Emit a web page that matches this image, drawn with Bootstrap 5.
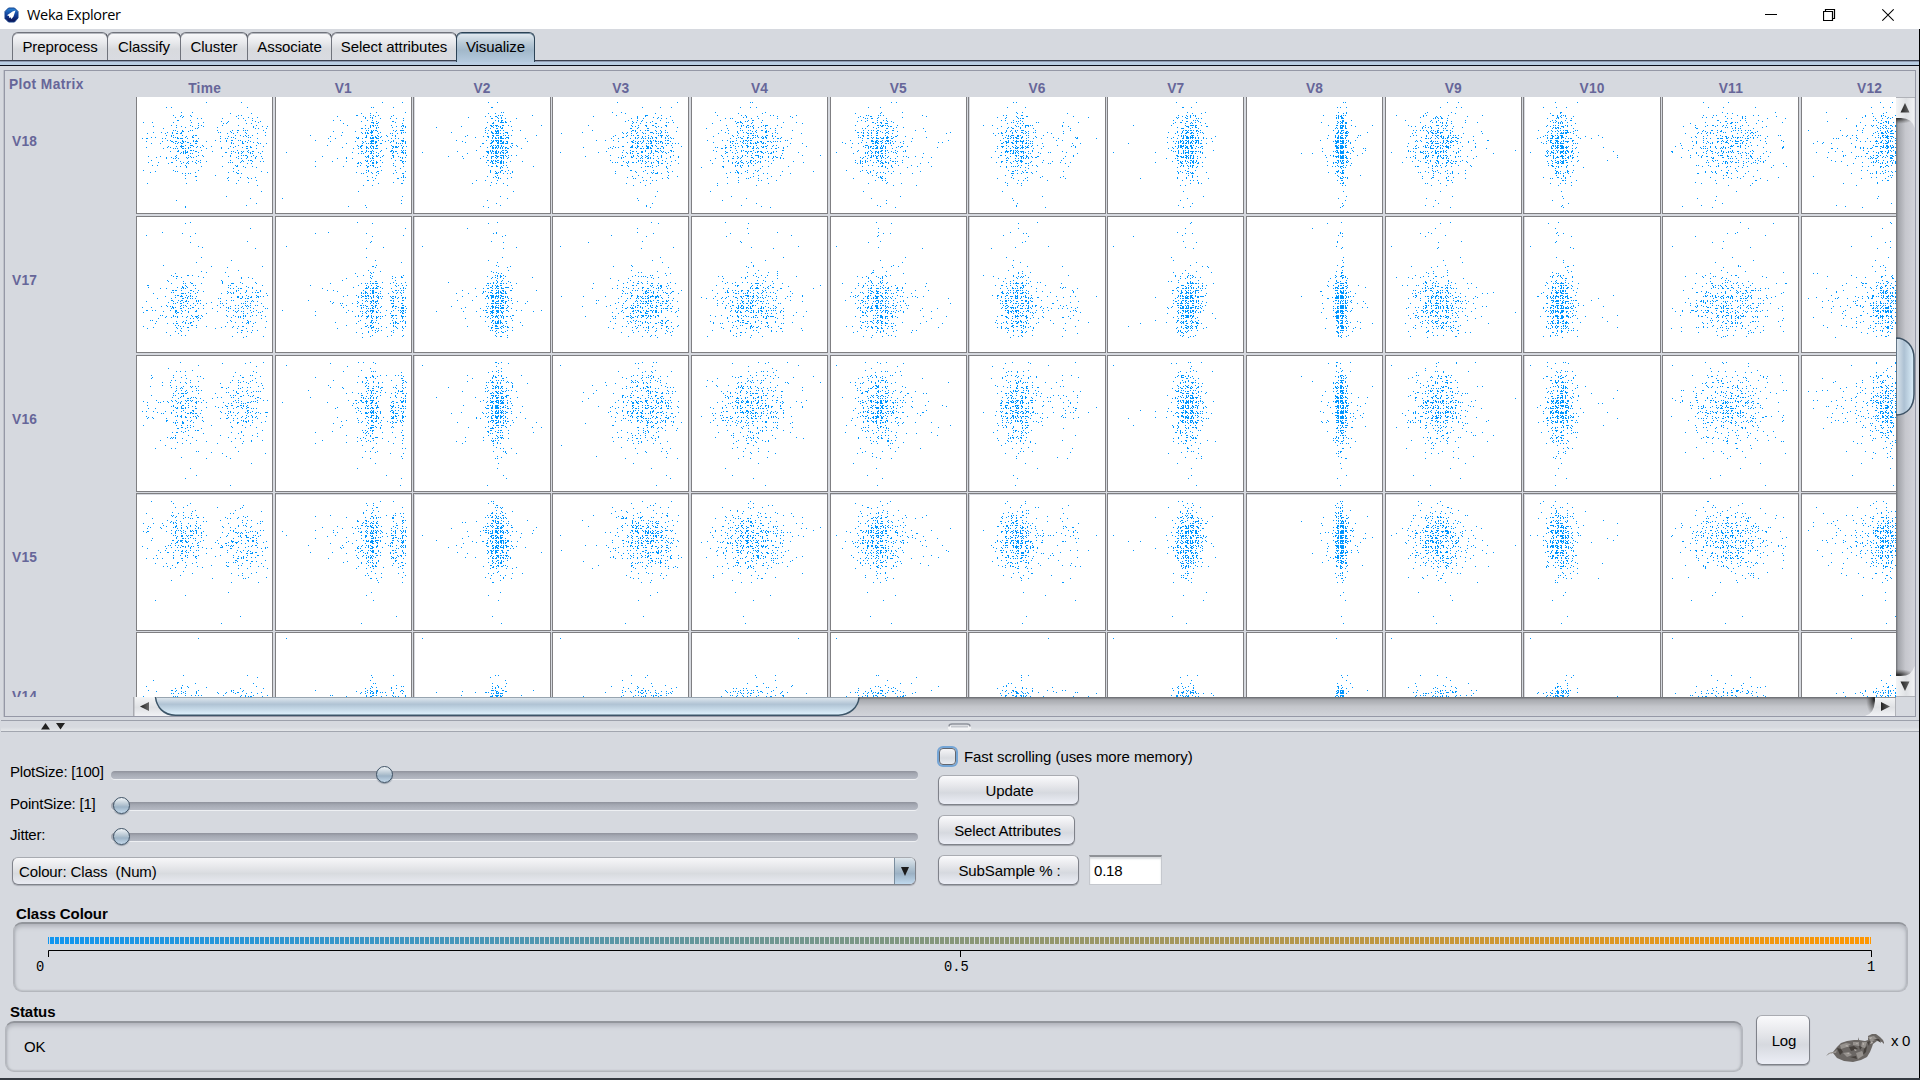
<!DOCTYPE html>
<html lang="en">
<head>
<meta charset="utf-8">
<title>Weka Explorer</title>
<link rel="stylesheet" href="https://cdn.jsdelivr.net/npm/bootstrap@5.3.0/dist/css/bootstrap.min.css">
<style>
  body { width:1920px; height:1080px; overflow:hidden; background:#d6d9df; color:#000; letter-spacing:-.07px;
         font-family:"Liberation Sans",Arial,sans-serif; font-size:15px; line-height:20px; }
  svg { display:block; flex:none; }
  .window { height:1080px; border-right:1px solid #000; }
  .titlebar { height:29px; background:#fff; padding-left:4px; margin-right:-1px; }
  .caption { font-family:"Open Sans","Noto Sans",sans-serif; font-size:14.5px; letter-spacing:-.32px; margin-left:8px; line-height:22px; }
  .wcontrols { gap:46px; padding-right:26px; }

  .tabs { height:31px; padding:3px 0 0 12px; }
  .tabs .nav-link { height:29px; padding:0; text-align:center; color:#000; border:1px solid #70737c; border-bottom-color:#10131c;
      border-right-color:#33363f; border-radius:6px 6px 0 0; line-height:20px; padding-top:4px; margin-right:-1px;
      background:linear-gradient(#f9f9fb,#e8e9ec 35%,#d8dade 60%,#d9dbe1); box-shadow:inset 0 1px 0 #b5b8bf; }
  .tabs .nav-link.active { color:#000; background:linear-gradient(#e4ebf1,#b9cad7 35%,#a2b8ca 60%,#b5cade); border-color:#2c4356; border-bottom:0; box-shadow:inset 0 1px 0 #7d93a5; z-index:2; position:relative; height:30px; }
  .tabstrip { height:6px; background:linear-gradient(#3a3f4e 0 1px,#8e9ab0 1px 2px,#b9cde2 2px 5px,#0b0e18 5px); }

  .plotpanel { margin:4px 3px 0 4px; height:647px; border:1px solid #9598a6; box-shadow:-1px 0 0 #c0c3cb; }
  .purple { color:#666699; font-weight:700; font-size:13.75px; line-height:16px; letter-spacing:.25px; }
  .colheads { height:26px; overflow:hidden; }
  .panelname { width:131px; padding:6px 0 0 4px; flex:none; letter-spacing:.4px; }
  .colhead { width:138.75px; flex:none; text-align:center; padding:10px 1.5px 0 0; }
  .plotbody { height:600px; overflow:hidden; }
  .rowheads { width:131px; flex:none; padding-left:7px; }
  .rowheads div { height:138.75px; padding-top:57px; }
  .rowheads div, .matrix { position:relative; top:-20px; }
  .viewport { width:1760px; height:600px; overflow:hidden; flex:none; }
  .matrix { display:grid; width:1803px;
     grid-template-columns:139px 138px 139px 139px 139px 138px 139px 139px 139px 138px 139px 139px 139px;
     grid-template-rows:139px 139px 138px 139px 139px; }
  .matrix canvas { display:block; }
  .hscroll { margin-left:128px; }

  .divider { height:12px; margin:3px 0 0 1px; border-top:1px solid #9ca0ab; border-bottom:1px solid #a2a6af; background:linear-gradient(#d6d9df 60%,#e5e7ea); }

  .controls { height:166px; }
  .sliders { width:920px; padding-top:30px; }
  .slide-row { height:31px; padding-left:10px; }
  .slide-row span { width:101px; white-space:nowrap; letter-spacing:-.2px; }
  .slide-row + .slide-row span { padding-top:1px; }
  .track { position:relative; width:807px; height:8px; margin-top:9px; border-radius:4px; background:linear-gradient(#8f929c,#a4a8b2 35%,#b6bac4); box-shadow:0 1px 0 #eef0f3; flex:none; }
  .knob { position:absolute; top:-5px; width:17px; height:17px; border-radius:50%; border:1.5px solid #3f5366; background:linear-gradient(#f0f4f7,#b4c4d1 45%,#9db3c6 60%,#c3d8ea); box-shadow:0 1px 1px #8f98a3; }
  .combo { height:28px; width:904px; margin:2px 0 0 12px; border:1.5px solid #80838b; border-top-color:#a8abb1; border-radius:6px; padding-left:6px; overflow:hidden;
     background:linear-gradient(#f7f7f9,#e6e7ea 35%,#d8dbdf 60%,#e9ebf2); box-shadow:0 1px 1px #a9acb4; line-height:27px; white-space:pre; letter-spacing:-.12px; }
  .combo-arrow { width:21px; border-left:1px solid #7a8d9e; background:linear-gradient(#dfe7ed,#afc1cf 40%,#9bb1c4 60%,#c0d9ee); }
  .actions { padding:14px 0 0 18px; }
  .nbtn { padding:2px 0 0 2px; color:#000; font-size:15px; line-height:20px; letter-spacing:-.1px; border:1.5px solid #7f828a; border-top-color:#a9abb1; border-radius:6px;
      background:linear-gradient(#fafafc,#e6e7eb 35%,#d6d9df 60%,#eceef6); box-shadow:0 1px 1px #a0a3aa; height:30px; }
  .tick { width:17px; height:17px; border:1.5px solid #62666e; border-radius:4px; background:linear-gradient(#f5f5f7,#d9dce1 60%,#e9ebf1); box-shadow:0 0 0 2px #74a5d6; margin:2px 8px 0 1px; }
  .percent { width:73px; height:30px; border:1px solid #c5c8ce; border-top:2px solid #8f9297; border-radius:0; background:#fff; padding:0 0 0 4px; font-size:15px; letter-spacing:-.2px; color:#000; margin-left:10px; box-shadow:inset 0 2px 2px #dadcdf; }

  .sunken { border:1px solid #b4b7bd; border-top:2px solid #92959b; border-radius:9px; box-shadow:inset 0 3px 4px #b4b7be, inset 1px 0 2px #aeb1b7, inset -1px 0 2px #aeb1b7; }
  .heading { font-weight:700; line-height:20px; }
  .legendbox { margin:0 11px 0 13px; height:70px; width:1895px; }
  .statusbox { width:1738px; height:51px; padding:14px 0 0 18px; line-height:20px; }
  .scale-label { font-family:"Liberation Mono",monospace; font-size:13.75px; fill:#000; letter-spacing:0; }
  .logbtn { width:54px; height:50px; }
  .taskedge { height:2px; background:#353a41; margin-right:-1px; }
</style>
</head>
<body>
<div class="window d-flex flex-column">
  <header class="titlebar d-flex align-items-center">
    <svg width="15" height="16" viewBox="0 0 15 16"><defs><linearGradient id="ic" x1="0" y1="0" x2="0" y2="1"><stop offset="0" stop-color="#2a86d8"/><stop offset=".5" stop-color="#123f9a"/><stop offset="1" stop-color="#0a0e4c"/></linearGradient></defs>
      <path d="M4.500 1h6L14 4.500v6.500L10.500 15h-6L1 11.500v-7z" fill="url(#ic)" stroke="#14408c" stroke-width="1"/><path d="M11.500 3.500 8.500 4.500 6 6.200 3 8.300l2 .7.300 2 1.200-.800 1 1.800 2-2.500 1-3z" fill="#fff"/></svg>
    <span class="caption">Weka Explorer</span>
    <div class="wcontrols d-flex ms-auto">
      <svg width="12" height="14"><path d="M0 6.500h12" stroke="#000"/></svg>
      <svg width="13" height="14"><path d="M.5 3.500h9v9h-9zM2.500 3.500v-2h9v9h-2" fill="none" stroke="#000" stroke-width="1.200"/></svg>
      <svg width="12" height="14"><path d="M.3 1.300l11.400 11.400M11.700 1.300.3 12.700" stroke="#000" stroke-width="1.200"/></svg>
    </div>
  </header>

  <nav class="nav tabs flex-nowrap">
    <a class="nav-link" style="width:96px">Preprocess</a>
    <a class="nav-link" style="width:74px">Classify</a>
    <a class="nav-link" style="width:68px">Cluster</a>
    <a class="nav-link" style="width:85px">Associate</a>
    <a class="nav-link" style="width:126px">Select attributes</a>
    <a class="nav-link active" style="width:79px">Visualize</a>
  </nav>
  <div class="tabstrip"></div>

  <section class="plotpanel">
    <div class="colheads d-flex purple" id="colheads"><div class="panelname">Plot Matrix</div></div>
    <div class="plotbody d-flex">
      <div class="rowheads purple" id="rowheads"></div>
      <div class="viewport"><div class="matrix" id="matrix"></div></div>
      <svg width="19" height="600" viewBox="0 0 19 600">
        <defs>
          <linearGradient id="vt"><stop offset="0" stop-color="#6c6e73"/><stop offset=".12" stop-color="#a3a5ab"/><stop offset=".5" stop-color="#c6c7cd"/><stop offset="1" stop-color="#d2d3da"/></linearGradient>
          <linearGradient id="vb"><stop offset="0" stop-color="#f4f5f6"/><stop offset=".55" stop-color="#dfe1e4"/><stop offset="1" stop-color="#f1f2f5"/></linearGradient>
          <linearGradient id="vh"><stop offset="0" stop-color="#dfe8ef"/><stop offset=".45" stop-color="#adc1d3"/><stop offset="1" stop-color="#dcf0fc"/></linearGradient>
          <linearGradient id="ar"><stop offset="0" stop-color="#222"/><stop offset="1" stop-color="#666"/></linearGradient>
          <radialGradient id="sh"><stop offset="0" stop-color="#222"/><stop offset="1" stop-color="#555" stop-opacity="0"/></radialGradient>
        </defs>
        <path d="M0 0h19v600H0z" fill="url(#vt)"/>
        <ellipse cx="2" cy="21" rx="17" ry="6" fill="url(#sh)"/>
        <ellipse cx="2" cy="578" rx="17" ry="6" fill="url(#sh)"/>
        <path d="M0 0h18.500v31Q16 21 5 21H0z" fill="url(#vb)"/><path d="M0 .5h19" stroke="#b0b2b8"/>
        <path d="M0 600h18.500v-31Q16 579 5 579H0z" fill="url(#vb)"/><path d="M0 599.500h19" stroke="#b0b2b8"/>
        <path d="M9 6l4.500 9.500h-9z" fill="url(#ar)"/><path d="M9 594l4.500-9.500h-9z" fill="url(#ar)"/>
        <path d="M0 241c10 0 18 8 18 20v36c0 13-7 21-18 21z" fill="url(#vh)" stroke="#3c5164" stroke-width="1.500"/>
      </svg>
    </div>
    <svg class="hscroll" width="1763" height="19" viewBox="0 0 1763 19">
      <defs>
        <linearGradient id="ht" x2="0" y2="1"><stop offset="0" stop-color="#66686c"/><stop offset=".14" stop-color="#a7a9ae"/><stop offset=".5" stop-color="#c4c6cb"/><stop offset="1" stop-color="#d2d4da"/></linearGradient>
        <linearGradient id="hb" x2="0" y2="1"><stop offset="0" stop-color="#f4f5f6"/><stop offset=".55" stop-color="#dfe1e4"/><stop offset="1" stop-color="#f1f2f5"/></linearGradient>
        <linearGradient id="hh" x2="0" y2="1"><stop offset="0" stop-color="#e3ebf1"/><stop offset=".4" stop-color="#b0c3d4"/><stop offset="1" stop-color="#e0f4ff"/></linearGradient>
      </defs>
      <path d="M0 0h1763v19H0z" fill="url(#ht)"/>
      <ellipse cx="1741" cy="2" rx="8" ry="17" fill="url(#sh)"/>
      <path d="M0 0h23q4 19 22 19H0z" fill="url(#hb)"/><path d="M.5 0v19" stroke="#a9abb1" stroke-width="2"/>
      <path d="M1763 0h-21v4q-1 13-10 15h31z" fill="url(#hb)"/><path d="M1762.500 0v19" stroke="#b0b2b8"/>
      <path d="M1742 .5h21" stroke="#8c8e93"/>
      <path d="M7 9.500l9-4.500v9z" fill="url(#ar)"/><path d="M1757 9.500l-9-4.500v9z" fill="url(#ar)"/>
      <path d="M22.500 0c1 10 8 18.200 20 18.200h663c11 0 20-8 20.500-18.200z" fill="url(#hh)"/>
      <path d="M22.500 0c1 10 8 18.200 20 18.200h663c11 0 20-8 20.500-18.200" fill="none" stroke="#3c5568" stroke-width="1.500"/>
      <path d="M23 .5h702" stroke="#98a5b0"/>
    </svg>
  </section>

  <div class="divider">
    <svg width="980" height="10"><path d="M40 8.500 44.500 2l4.500 6.500zM55 2h9l-4.500 6.500z" fill="#222"/><rect x="947" y="3.500" width="23" height="6" rx="3" fill="#f2f3f5"/><path d="M948 5.500q0-2.500 3-2.500h15q3 0 3 2.500" fill="none" stroke="#8f939c" stroke-width="1.500"/><path d="M950 5.500h17" stroke="#c4c7cd" stroke-width="2"/></svg>
  </div>

  <main class="controls d-flex">
    <div class="sliders">
      <div class="slide-row d-flex"><span>PlotSize: [100]</span><div class="track"><div class="knob" style="left:265px"></div></div></div>
      <div class="slide-row d-flex"><span>PointSize: [1]</span><div class="track"><div class="knob" style="left:2px"></div></div></div>
      <div class="slide-row d-flex"><span>Jitter:</span><div class="track"><div class="knob" style="left:2px"></div></div></div>
      <div class="combo d-flex justify-content-between"><span>Colour: Class  (Num)</span>
        <div class="combo-arrow d-flex align-items-center justify-content-center"><svg width="8" height="9"><path d="M0 0h8L4 9z" fill="#1b1b1b"/></svg></div></div>
    </div>
    <div class="actions">
      <div class="d-flex"><div class="tick"></div><span style="line-height:21px">Fast scrolling (uses more memory)</span></div>
      <div class="d-flex flex-column align-items-start" style="gap:10px;margin-top:8px">
        <button class="btn nbtn" style="width:141px">Update</button>
        <button class="btn nbtn" style="width:137px">Select Attributes</button>
        <div class="d-flex"><button class="btn nbtn" style="width:141px">SubSample % :</button><input class="percent" value="0.18"></div>
      </div>
    </div>
  </main>

  <section style="height:94px;padding-top:6px">
    <div class="heading" style="padding-left:16px;height:18px">Class Colour</div>
    <div class="legendbox sunken">
      <svg id="legend" width="1892" height="60" viewBox="14 924 1892 60"></svg>
    </div>
  </section>
  <footer class="d-flex" style="height:86px;padding:10px 0 0 5px">
    <div>
      <div class="heading" style="padding-left:5px;height:19px">Status</div>
      <div class="statusbox sunken">OK</div>
    </div>
    <button class="btn nbtn logbtn" style="margin:13px 0 0 13px">Log</button>
    <svg width="58" height="30" viewBox="0 0 58 30" style="margin:32px 0 0 16px">
      <path d="M1 21l2-2 4-1 4-5 4-4 6-2 7-1 4 0 0-3 1 3 6 1 3-1 0-4 4-2 4 0 4 3 3 3 2 5-3-3-5-1-4 3-1 3-2 5-3 5-6 3-8 2-9-1-7-3-4-5-4 1-3 2z" fill="#6b6764"/>
      <path d="M14 11l6-2 5 1-4 3-6 2zM27 8l6 0 0 4-6-1zM36 8l5 0-2 6-4-1zM17 19l6-1 3 3-5 2zM30 19l6-2 2 4-6 4zM42 3l6-1 3 3-6 3zM6 19l5-3-1 3z" fill="#96928e"/>
      <path d="M11 14l4 1 2 3-3 3zM23 13l5-1 4 3-7 2zM33 12l3 1-2 3zM38 15l3-3-1 6-3 3zM24 23l6-1 1 3zM47 5l6 0 2 4-4-3zM41 8l3-1-1 5z" fill="#45403c"/>
      <path d="M2 20l5-2-2 2zM19 12l2-1 2 2zM28 15l3 1-2 1zM43 4l3-1-1 2zM20 20l3-1 0 1zM36 10l2-1 0 2zM30 9l2 0-1 1zM44 10l2-3 1 2z" fill="#bdb8b3"/>
    </svg>
    <span style="margin:29px 0 0 7px;white-space:nowrap;letter-spacing:-.3px">x 0</span>
  </footer>
  <div class="taskedge"></div>
</div>

<script>
// Deterministic generator so the sampled instances are stable.
let seed = 20177;
function rnd() { seed |= 0; seed = seed + 0x6D2B79F5 | 0; let t = Math.imul(seed ^ seed >>> 15, 1 | seed); t = t + Math.imul(t ^ t >>> 7, 61 | t) ^ t; return ((t ^ t >>> 14) >>> 0) / 4294967296; }
function gauss() { return Math.sqrt(-2 * Math.log(rnd() + 1e-9)) * Math.cos(6.28318 * rnd()); }
function pick(f) { let v; do { v = f(); } while (v < 5 || v > 105); return Math.round(v); }
// Normal core with a share of wide tail values.
const bell = (m, s, tail = .06, wide = 3) => () => m + gauss() * (rnd() < tail ? s * wide : s);
const low = (m, s, share, span) => () => rnd() < share ? m + Math.log(rnd() + 1e-4) * span : m + gauss() * s;
const high = (m, s, share, span) => () => rnd() < share ? m - Math.log(rnd() + 1e-4) * span : m + gauss() * s;

const cols = {
  Time: () => { const r = rnd(); return r < .06 ? 5 + rnd() * 16 : r < .52 ? 19 + rnd() * 15 + rnd() * 23 : r < .55 ? 55 + rnd() * 14 : 66 + rnd() * 12 + rnd() * 28; },
  V1: () => { const r = rnd(); return r < .17 ? 80 + Math.log(rnd() + 1e-4) * 17 : r < .64 ? 77.5 + gauss() * 4.9 : r < .82 ? 95.300 + gauss() * 1.8 : 102.500 + gauss() * 1.8; },
  V2: bell(67, 5, .12, 4),
  V3: bell(76, 13, .16, 1.9),
  V4: bell(48.5, 12.5, .2, 1.9),
  V5: high(37, 9, .23, 17),
  V6: () => rnd() < .06 ? 80 + gauss() * 4 : high(38, 8, .18, 14)(),
  V7: bell(64.5, 6, .07, 3.2),
  V8: bell(76, 2.600, .16, 4),
  V9: high(40, 11, .25, 16),
  V10: high(28.5, 6, .13, 11),
  V11: bell(55, 17, .1, 1.5),
  V12: low(70, 8, .25, 20)
};
const rows = {
  V18: bell(54, 13.5, .1, 1.9),
  V17: () => rnd() < .02 ? 5 + rnd() * 40 : 71 + gauss() * 13.5,
  V16: bell(42, 13, .22, 1.8),
  V15: bell(37, 13, .06, 1.7),
  V14: bell(60.500, 8.500, .02, 2)
};
const cn = Object.keys(cols), rn = Object.keys(rows), data = [];
for (let i = 0; i < 512; i++) {
  const d = { x: cn.map(c => pick(cols[c])), y: rn.map(r => pick(rows[r])) };
  d.y[3] = Math.max(5, d.y[3] + (d.x[0] < 60 ? -3 : 3));
  if (d.y[1] > 97) d.y[1] = 58 + Math.floor(rnd() * 38);
  data.push(d);
}
// The extreme instances of each row.
data[0].x = [50, 9, 7, 6, 86, 5, 64, 5, 72, 5, 5, 8, 40]; data[0].y = [60, 24, 8, 33, 5];
data[1].x[0] = 68; data[1].x[1] = 69; data[1].y[3] = 104;
data[2].x[0] = 75; data[2].x[1] = 100; data[2].y[2] = 104;
data[3].x[0] = 43; data[3].x[1] = 66; data[3].y[1] = 5;
data[4].x[0] = 39; data[4].x[1] = 73; data[4].y[0] = 104;

cn.forEach(c => document.getElementById('colheads').insertAdjacentHTML('beforeend', `<div class="colhead">${c}</div>`));
rn.forEach(r => document.getElementById('rowheads').insertAdjacentHTML('beforeend', `<div>${r}</div>`));

// Cells lie on a 1.25 px unit grid; every mark is snapped to whole pixels.
const P = 138.75, S = 136.25, matrix = document.getElementById('matrix');
rn.forEach((r, j) => cn.forEach((c, k) => {
  const x0 = 136.25 + P * k, y0 = 77.5 + P * j, L = Math.floor(x0), T = Math.floor(y0);
  const R = Math.floor(x0 + S) - L, B = Math.floor(y0 + S) - T;
  const cv = document.createElement('canvas'); cv.width = 138; cv.height = 138;
  const g = cv.getContext('2d');
  g.fillStyle = '#7f7f82'; g.fillRect(0, 0, R + 1, 1); g.fillRect(0, B, R + 1, 1); g.fillRect(0, 0, 1, B + 1); g.fillRect(R, 0, 1, B + 1);
  const wx = Math.floor(x0 + 1.25) - L, wy = Math.floor(y0 + 1.25) - T;
  g.fillStyle = '#fff'; g.fillRect(wx, wy, R - wx, B - wy);
  g.fillStyle = '#0096ff';
  data.forEach(d => g.fillRect(Math.floor(x0 + d.x[k] * 1.25) - L, Math.floor(y0 + d.y[j] * 1.25) - T, 1, 1));
  matrix.append(cv);
}));

// Class colour scale: short blocks running from blue to orange.
let s = '';
const mix = t => `rgb(${Math.round(16 + 239 * t)},150,${Math.round(240 * (1 - t))})`;
s += `<rect x="48" y="937" width="1" height="7" fill="${mix(0)}"/>`;
for (let x = 50; x < 1871; x += 5) s += `<rect x="${x}" y="937" width="${Math.min(4, 1871 - x)}" height="7" fill="${mix((x - 48) / 1823)}"/>`;
s += '<path d="M48.500 957v-6.500h1823v6.500M960.500 951v6" fill="none" stroke="#000"/>';
s += '<text class="scale-label" x="36" y="971">0</text><text class="scale-label" x="944" y="971">0.5</text><text class="scale-label" x="1867" y="971">1</text>';
document.getElementById('legend').innerHTML = s;
</script>
<script src="https://cdn.jsdelivr.net/npm/bootstrap@5.3.0/dist/js/bootstrap.bundle.min.js"></script>
</body>
</html>
